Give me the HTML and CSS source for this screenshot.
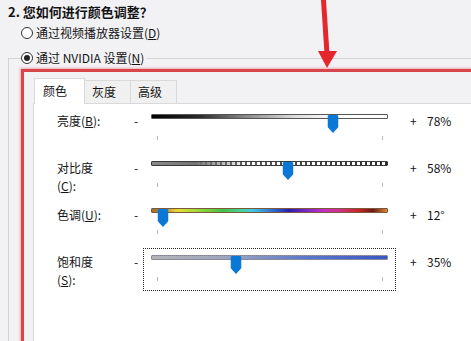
FILE: index.html
```html
<!doctype html>
<html lang="zh-CN">

	<head>
		<meta charset="UTF-8">
		<title>颜色调整</title>
		<link rel="stylesheet" href="styles.css">
	</head>

	<body>
		<div class="page">
			<h2 class="question">2. 您如何进行颜色调整？</h2>
			<label class="radio radio-first"><span class="circle"></span>通过视频播放器设置(<u>D</u>)</label>
			<fieldset class="group">
				<legend><label class="radio"><span class="circle on"></span>通过 NVIDIA 设置(<u>N</u>)</label></legend>
				<div class="mark">
					<div class="tabs">
						<span class="tab active">颜色</span>
						<span class="tab">灰度</span>
						<span class="tab">高级</span>
					</div>
					<div class="panel">
						<div class="row">
							<div class="label">亮度(<u>B</u>):</div>
							<div class="minus">-</div>
							<div class="slider">
								<div class="rail">
									<div class="track bright"></div>
									<i class="tick start"></i><i class="tick end"></i>
									<span class="thumb" style="left: 77%"><svg width="11" height="18" viewBox="0 0 11 18"><path d="M1.5 0H9.5Q11 0 11 1.5V12L5.5 18L0 12V1.5Q0 0 1.5 0Z"/></svg></span>
								</div>
							</div>
							<div class="plus">+</div>
							<div class="val">78%</div>
						</div>
						<div class="row">
							<div class="label">对比度<br>(<u>C</u>):</div>
							<div class="minus">-</div>
							<div class="slider">
								<div class="rail">
									<div class="track contrast"></div>
									<i class="tick start"></i><i class="tick end"></i>
									<span class="thumb" style="left: 58%"><svg width="11" height="18" viewBox="0 0 11 18"><path d="M1.5 0H9.5Q11 0 11 1.5V12L5.5 18L0 12V1.5Q0 0 1.5 0Z"/></svg></span>
								</div>
							</div>
							<div class="plus">+</div>
							<div class="val">58%</div>
						</div>
						<div class="row">
							<div class="label">色调(<u>U</u>):</div>
							<div class="minus">-</div>
							<div class="slider">
								<div class="rail">
									<div class="track hue"></div>
									<i class="tick start"></i><i class="tick end"></i>
									<span class="thumb" style="left: 5%"><svg width="11" height="18" viewBox="0 0 11 18"><path d="M1.5 0H9.5Q11 0 11 1.5V12L5.5 18L0 12V1.5Q0 0 1.5 0Z"/></svg></span>
								</div>
							</div>
							<div class="plus">+</div>
							<div class="val">12°</div>
						</div>
						<div class="row">
							<div class="label">饱和度<br>(<u>S</u>):</div>
							<div class="minus">-</div>
							<div class="slider focus">
								<div class="rail">
									<div class="track satur"></div>
									<i class="tick start"></i><i class="tick end"></i>
									<span class="thumb" style="left: 36%"><svg width="11" height="18" viewBox="0 0 11 18"><path d="M1.5 0H9.5Q11 0 11 1.5V12L5.5 18L0 12V1.5Q0 0 1.5 0Z"/></svg></span>
								</div>
							</div>
							<div class="plus">+</div>
							<div class="val">35%</div>
						</div>
					</div>
				</div>
			</fieldset>
			<!-- 标注箭头 -->
			<svg class="arrow" width="40" height="72" viewBox="0 0 40 72">
				<polygon points="16,0 21,0 24.5,54 19.5,54" />
				<polygon points="13,51 32,51 22,68" />
			</svg>
		</div>
	</body>

</html>
```

FILE: styles.css
```css
html,
body {
	margin: 0;
	padding: 0;
}

body {
	width: 471px;
	height: 341px;
	overflow: hidden;
	background: #f2f1f4;
	font-family: "Noto Sans CJK SC", "Noto Sans", sans-serif;
	font-size: 12px;
	color: #141414;
}

.page {
	position: relative;
	height: 341px;
	padding-left: 8px;
	overflow: hidden;
}

.question {
	margin: 0;
	padding-top: 3px;
	font-size: 13px;
	line-height: 18px;
	font-weight: bold;
}

.radio {
	display: flex;
	align-items: center;
	line-height: 18px;
}

.radio-first {
	margin: 3px 0 0 13px;
}

.circle {
	position: relative;
	width: 10px;
	height: 10px;
	margin-right: 3px;
	border: 1px solid #333333;
	border-radius: 50%;
	background: #ffffff;
}

.circle.on::after {
	content: "";
	position: absolute;
	left: 2px;
	top: 2px;
	width: 6px;
	height: 6px;
	border-radius: 50%;
	background: #222222;
}

.group {
	min-width: 0;
	margin: 7px -60px 0 0;
	padding: 2px 0 0 12px;
	border: 1px solid #d3d3d3;
	border-right: none;
	border-bottom: none;
}

.group legend {
	margin: 0;
	padding: 0 3px 0 0;
}

.mark {
	height: 300px;
	margin-right: -60px;
	padding: 6px 0 0 9px;
	border-top: 3px solid #d8464c;
	border-left: 3px solid #d8464c;
	box-shadow: -1px -1px 2px rgba(232, 130, 136, .6);
}

.tabs {
	display: flex;
	align-items: flex-end;
	height: 25px;
	padding-left: 1px;
}

.tab {
	box-sizing: border-box;
	width: 47px;
	height: 23px;
	margin-left: -1px;
	padding-left: 7px;
	line-height: 21px;
	border: 1px solid #d9d9d9;
	border-bottom: none;
	background: #f0f0f0;
}

.tab.active {
	position: relative;
	z-index: 1;
	width: 51px;
	height: 26px;
	margin: 0 0 -1px 0;
	padding-left: 8px;
	line-height: 24px;
	background: #ffffff;
}

.panel {
	height: 240px;
	padding: 3px 0 0 23px;
	border-top: 1px solid #d9d9d9;
	border-left: 1px solid #d9d9d9;
	background: #ffffff;
}

.row {
	display: grid;
	grid-template-columns: 77px 9px 253px 31px auto;
	height: 43px;
	margin-bottom: 4px;
}

.label,
.minus,
.plus,
.val {
	padding-top: 5px;
	line-height: 18px;
}

.plus {
	padding-left: 14px;
}

.slider {
	box-sizing: border-box;
	padding: 0 7px;
	border: 1px dotted transparent;
}

.slider.focus {
	border-color: #222222;
}

.rail {
	position: relative;
	height: 100%;
}

.track {
	position: relative;
	box-sizing: border-box;
	height: 5px;
	margin-top: 6px;
	border: 1px solid #555555;
	border-radius: 1px;
}

.bright {
	background: linear-gradient(90deg, #000000 0%, #2a2a2a 20%, #8a8a8a 40%, #dcdcdc 60%, #ffffff 78%, #ffffff 100%);
}

.contrast {
	border-color: #3a3a3a;
	background: linear-gradient(90deg, #8a8a8a, #5a5a5a 40%, #2a2a2a);
}

.contrast::after {
	content: "";
	position: absolute;
	left: 0;
	right: 0;
	top: 0;
	height: 3px;
	background: repeating-linear-gradient(90deg, #ffffff 0 3px, transparent 3px 5px);
	-webkit-mask-image: linear-gradient(90deg, transparent 18%, #000 40%);
	mask-image: linear-gradient(90deg, transparent 18%, #000 40%);
}

.hue {
	border-color: #7a5a3a;
	background: linear-gradient(90deg, #a8702a 0%, #c0882c 5%, #e6dc34 11%, #a8dc3c 18%, #46c046 30%, #46d4a4 39%, #44c4e4 43%, #2846c4 55%, #2a1eb4 58%, #6a24c4 64%, #c42ec6 73%, #d23088 80%, #c82424 88%, #6a1a12 94%, #d8883a 100%);
}

.satur {
	border-color: #8a8a9a;
	background: linear-gradient(90deg, #b4b4b4, #9aa4c0 35%, #5a78cc 65%, #3858c4);
}

.tick {
	position: absolute;
	top: 22px;
	width: 1px;
	height: 4px;
	background: #b8b8b8;
}

.tick.start {
	left: 6px;
}

.tick.end {
	right: 5px;
}

.thumb {
	position: absolute;
	top: 1px;
	width: 11px;
	height: 18px;
	transform: translateX(-50%);
}

.thumb svg {
	display: block;
	fill: #0b78d6;
}

.arrow {
	position: absolute;
	left: 305px;
	top: 0;
	fill: #e4262d;
}
```
